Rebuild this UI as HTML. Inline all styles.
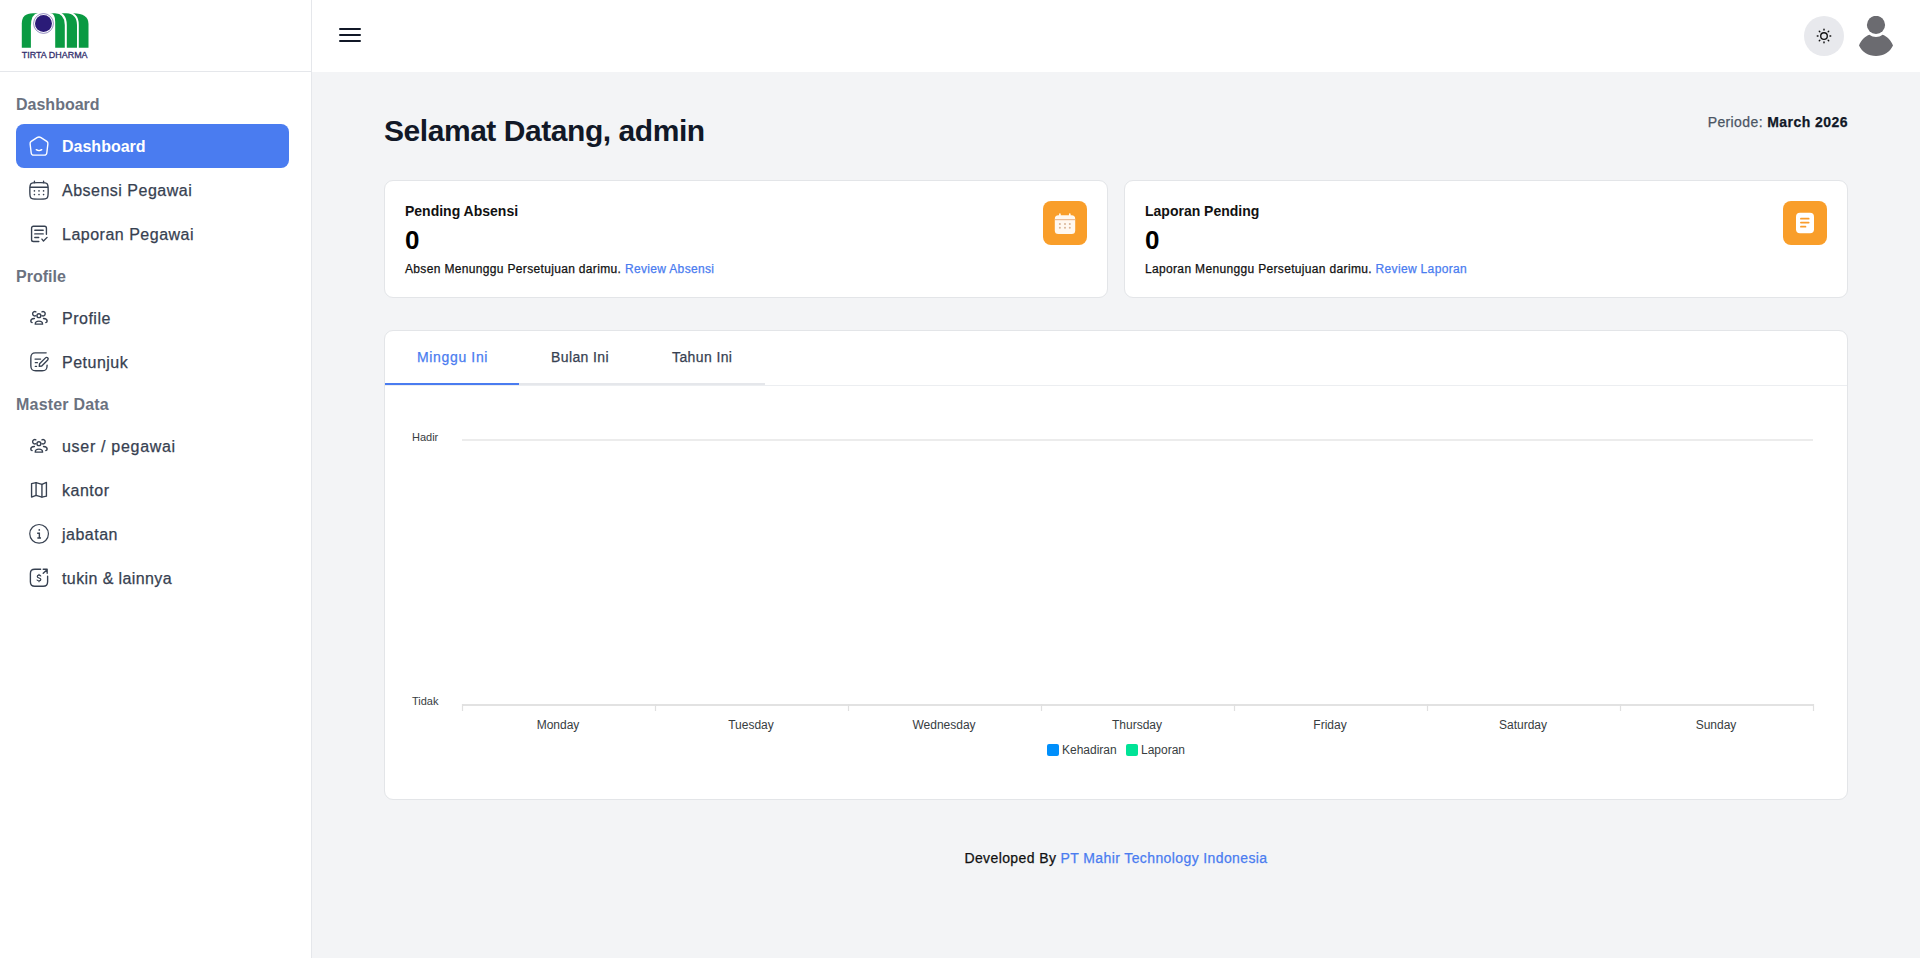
<!DOCTYPE html>
<html>
<head>
<meta charset="utf-8">
<style>
*{box-sizing:border-box;margin:0;padding:0}
html,body{width:1920px;height:958px;overflow:hidden;background:#f3f4f6;font-family:"Liberation Sans",sans-serif;}
.abs{position:absolute;white-space:nowrap;line-height:1}
#sidebar{position:absolute;left:0;top:0;width:312px;height:958px;background:#fff;border-right:1px solid #e5e7eb}
#logo{position:absolute;left:0;top:0;width:311px;height:72px;border-bottom:1px solid #e5e7eb}
#header{position:absolute;left:312px;top:0;width:1608px;height:72px;background:#fff}
.sec{position:absolute;left:16px;font-size:16px;line-height:16px;font-weight:bold;color:#6b7280;white-space:nowrap}
.item{position:absolute;left:16px;width:273px;height:44px;border-radius:8px;color:#374151;font-size:16px;line-height:16px;white-space:nowrap;letter-spacing:0.5px;-webkit-text-stroke:0.25px currentColor}
.item.active{background:#4a7cf0;color:#fff;font-weight:bold;letter-spacing:0;-webkit-text-stroke:0}
.item svg{position:absolute;left:12px;top:11px;width:22px;height:22px;fill:none;stroke:currentColor;stroke-width:1.5;stroke-linecap:round;stroke-linejoin:round}
.item span{position:absolute;left:46px;top:15px}
.card{position:absolute;background:#fff;border:1px solid #e3e5e8;border-radius:9px}
.reg{letter-spacing:0.028em;-webkit-text-stroke:0.25px currentColor}
.ibox{position:absolute;width:44px;height:44px;border-radius:8px;background:#f99e2a}
.ibox svg{position:absolute}
.ylab{position:absolute;font-size:11px;line-height:11px;color:#373d3f;white-space:nowrap}
.xlab{position:absolute;font-size:12px;line-height:12px;color:#373d3f;white-space:nowrap;width:120px;text-align:center}
</style>
</head>
<body>
<div id="sidebar">
  <div id="logo">
    <svg style="position:absolute;left:16px;top:8px" width="80" height="56" viewBox="0 0 80 56">
      <path d="M5.8 39.7 V15.5 Q5.8 5.3 17 5.3 H57 Q72.5 5.3 72.5 16 V39.7 Z" fill="#0a9a42"/>
      <path d="M14.9 40 V18 Q14.9 6 22 5 H34 Q39.2 5 39.2 14 V40 Z" fill="#fff"/>
      <path d="M39 4 C47 4.6 49.8 9 49.8 17 V40" stroke="#fff" stroke-width="2" fill="none"/>
      <path d="M50 4 C58.5 4.6 61.9 9 61.9 17 V40" stroke="#fff" stroke-width="1.8" fill="none"/>
      <circle cx="27.5" cy="15.5" r="9.9" fill="#fff" stroke="#4a3f95" stroke-width="0.6"/>
      <circle cx="27.5" cy="15.5" r="8.5" fill="#2b1b78"/>
      <text x="5.8" y="49.8" font-family="Liberation Sans" font-size="9.2" fill="#34306e" stroke="#34306e" stroke-width="0.3" textLength="65.8" lengthAdjust="spacingAndGlyphs">TIRTA DHARMA</text>
    </svg>
  </div>
  <div class="sec" style="top:97px">Dashboard</div>
  <div class="item active" style="top:124px">
    <svg viewBox="0 0 24 24"><path d="M9.8 2.9 Q12 1.5 14.2 2.9 L20.5 7 Q21.9 7.9 21.7 9.6 L20.5 19.6 Q20.2 22 17.8 22 H6.2 Q3.8 22 3.5 19.6 L2.3 9.6 Q2.1 7.9 3.5 7 Z"/><path d="M9 16c.85.63 1.885 1 3 1s2.15-.37 3-1"/></svg>
    <span>Dashboard</span></div>
  <div class="item" style="top:168px">
    <svg viewBox="0 0 24 24"><path d="M2 12c0-3.771 0-5.657 1.172-6.828S6.229 4 10 4h4c3.771 0 5.657 0 6.828 1.172S22 8.229 22 12v2c0 3.771 0 5.657-1.172 6.828S17.771 22 14 22h-4c-3.771 0-5.657 0-6.828-1.172S2 17.771 2 14z"/><path d="M7 4V2.5M17 4V2.5M2.5 9h19"/><g fill="currentColor" stroke="none"><circle cx="7" cy="13" r="0.9"/><circle cx="12" cy="13" r="0.9"/><circle cx="17" cy="13" r="0.9"/><circle cx="7" cy="17" r="0.9"/><circle cx="12" cy="17" r="0.9"/><circle cx="17" cy="17" r="0.9"/></g></svg>
    <span>Absensi Pegawai</span></div>
  <div class="item" style="top:212px">
    <svg viewBox="0 0 24 24"><path d="M11.8 20.15H5.9a2 2 0 0 1 -2 -2V5.6a2 2 0 0 1 2 -2h12.2a2 2 0 0 1 2 2v6.75"/><path d="M7.4 7.9h9.2M7.4 11.9h9.2M7.4 15.85h4.3"/><path d="M15.2 17.6l1.7 2.1l3.9 -4"/></svg>
    <span>Laporan Pegawai</span></div>
  <div class="sec" style="top:269px">Profile</div>
  <div class="item" style="top:296px">
    <svg viewBox="0 0 24 24"><circle cx="11.9" cy="9.5" r="2.1"/><path d="M8.6 5.3A2.4 2.4 0 1 0 8.6 9.5"/><path d="M15.2 5.3A2.4 2.4 0 1 1 15.2 9.5"/><path d="M7.9 18.7C7.9 16.6 9.5 15.4 11.9 15.4S15.9 16.6 15.9 18.7Z"/><path d="M7 12.5C4.5 12.7 3 13.8 3 15.2C3 16 3.6 16.7 4.5 17"/><path d="M16.9 12.5C19.4 12.7 20.9 13.8 20.9 15.2C20.9 16 20.3 16.7 19.4 17"/></svg>
    <span>Profile</span></div>
  <div class="item" style="top:340px">
    <svg viewBox="0 0 24 24"><path d="M19.8 2H8C4.2 2 3.1 3.4 3.1 7.5V16.2C3.1 20.3 4.5 21.6 8.5 21.6H15.4C19.5 21.6 20.8 20.3 20.8 16.2V15.5"/><path d="M7.7 8.8h6M8 12.7h2.2M8 16.8h1.3"/><path d="M12.3 16.7L12.6 14L19.1 7.5A1.65 1.65 0 0 1 21.5 9.8L15 16.4Z"/></svg>
    <span>Petunjuk</span></div>
  <div class="sec" style="top:397px;letter-spacing:0.2px">Master Data</div>
  <div class="item" style="top:424px">
    <svg viewBox="0 0 24 24"><circle cx="11.9" cy="9.5" r="2.1"/><path d="M8.6 5.3A2.4 2.4 0 1 0 8.6 9.5"/><path d="M15.2 5.3A2.4 2.4 0 1 1 15.2 9.5"/><path d="M7.9 18.7C7.9 16.6 9.5 15.4 11.9 15.4S15.9 16.6 15.9 18.7Z"/><path d="M7 12.5C4.5 12.7 3 13.8 3 15.2C3 16 3.6 16.7 4.5 17"/><path d="M16.9 12.5C19.4 12.7 20.9 13.8 20.9 15.2C20.9 16 20.3 16.7 19.4 17"/></svg>
    <span style="letter-spacing:0.7px">user / pegawai</span></div>
  <div class="item" style="top:468px">
    <svg viewBox="0 0 24 24"><path d="M3.9 5L8.8 3.9L15.2 5.8L20.1 3.8V18.7L15.2 19.7L8.8 17.9L3.9 19.7Z"/><path d="M8.8 3.9V17.9M15.2 5.8V19.7"/></svg>
    <span>kantor</span></div>
  <div class="item" style="top:512px">
    <svg viewBox="0 0 24 24"><circle cx="12.1" cy="11.85" r="10.2" stroke-width="1.3"/><path d="M10 11.2H12.4V16.3M10.2 16.3H14.2" stroke-linecap="butt" stroke-linejoin="miter"/><circle cx="12.3" cy="7.6" r="0.95" fill="currentColor" stroke="none"/></svg>
    <span>jabatan</span></div>
  <div class="item" style="top:556px">
    <svg viewBox="0 0 24 24"><path d="M13.75 2.5H7.5C4 2.5 2.6 3.9 2.6 7.4V16C2.6 19.5 4 20.95 7.5 20.95H16.5C20 20.95 21.4 19.5 21.4 16V10.1"/><path d="M16.6 2.5H20.9V6.9M16.6 6.9L20.8 3"/><path d="M13.9 9.8C13.5 9.2 12.9 8.9 12 8.9C10.9 8.9 10.1 9.5 10.1 10.4C10.1 12.4 14 11.5 14 13.6C14 14.5 13.2 15.1 12 15.1C11 15.1 10.3 14.8 9.9 14.2M12 7.9V8.9M12 15.1V16" stroke-width="1.3"/></svg>
    <span style="letter-spacing:0.4px">tukin &amp; lainnya</span></div>
</div>

<div id="header">
  <svg style="position:absolute;left:27px;top:27px" width="22" height="16" viewBox="0 0 22 16"><path d="M1 2h20M1 8h20M1 14h20" stroke="#111827" stroke-width="2" stroke-linecap="round"/></svg>
  <div style="position:absolute;left:1492px;top:16px;width:40px;height:40px;border-radius:50%;background:#e8e9ed">
    <svg style="position:absolute;left:12px;top:12px" width="16" height="16" viewBox="0 0 16 16">
      <circle cx="8" cy="8" r="3.3" fill="none" stroke="#111" stroke-width="1.35"/>
      <path d="M8 1.3v0.7M8 14v0.7M1.3 8h0.7M14 8h0.7M3.3 3.3l.5 .5M12.2 12.2l.5 .5M3.3 12.7l.5 -.5M12.2 3.8l.5 -.5" stroke="#111" stroke-width="1.45" stroke-linecap="round"/>
    </svg>
  </div>
  <svg style="position:absolute;left:1547px;top:16px" width="34" height="40" viewBox="0 0 34 40">
    <circle cx="17" cy="8.9" r="9.1" fill="#6b6b70"/>
    <path d="M0 29.5 C2 24 6.5 20 10.5 18.8 C12.5 20.3 14.5 21 17 21 C19.5 21 21.5 20.3 23.5 18.8 C27.5 20 32 24 34 29.5 C31 36 24.5 40 17 40 C9.5 40 3 36 0 29.5 Z" fill="#6b6b70"/>
  </svg>
</div>

<div class="abs" style="left:384px;top:116px;font-size:30px;line-height:30px;font-weight:bold;color:#111827;letter-spacing:-0.45px">Selamat Datang, admin</div>
<div class="abs reg" style="right:72px;top:115px;font-size:14px;line-height:14px;color:#4b5563">Periode: <b style="color:#111827;letter-spacing:0.45px">March 2026</b></div>

<div class="card" style="left:384px;top:180px;width:724px;height:118px">
  <div class="abs" style="left:20px;top:23px;font-size:14px;line-height:14px;font-weight:bold;color:#111">Pending Absensi</div>
  <div class="abs" style="left:20px;top:46px;font-size:26px;line-height:26px;font-weight:bold;color:#000">0</div>
  <div class="abs reg" style="left:20px;top:82px;font-size:12px;line-height:12px;color:#111">Absen Menunggu Persetujuan darimu. <span style="color:#4a7cf0">Review Absensi</span></div>
  <div class="ibox" style="left:658px;top:20px">
    <svg style="left:0;top:0" width="44" height="44" viewBox="0 0 44 44">
      <rect x="11.8" y="14.3" width="20.4" height="18.8" rx="3.6" fill="#fff8f0"/>
      <path d="M16.9 13.2v2.5M26.8 13.2v2.5" stroke="#fff8f0" stroke-width="1.7" stroke-linecap="round"/>
      <path d="M11.8 18.7h20.4" stroke="#e3a676" stroke-width="0.9"/>
      <g fill="#d9b496"><circle cx="16.9" cy="23" r="1"/><circle cx="22" cy="23" r="1"/><circle cx="26.8" cy="23" r="1"/><circle cx="16.9" cy="26.7" r="1"/><circle cx="22" cy="26.7" r="1"/><circle cx="26.8" cy="26.7" r="1"/></g>
    </svg>
  </div>
</div>
<div class="card" style="left:1124px;top:180px;width:724px;height:118px">
  <div class="abs" style="left:20px;top:23px;font-size:14px;line-height:14px;font-weight:bold;color:#111">Laporan Pending</div>
  <div class="abs" style="left:20px;top:46px;font-size:26px;line-height:26px;font-weight:bold;color:#000">0</div>
  <div class="abs reg" style="left:20px;top:82px;font-size:12px;line-height:12px;color:#111">Laporan Menunggu Persetujuan darimu. <span style="color:#4a7cf0">Review Laporan</span></div>
  <div class="ibox" style="left:658px;top:20px">
    <svg style="left:0;top:0" width="44" height="44" viewBox="0 0 44 44">
      <rect x="13" y="11.8" width="18" height="20.4" rx="4" fill="#fff"/>
      <path d="M17.9 17.7h7.8M17.9 21.6h7.8M17.9 25.7h4.6" stroke="#f99c2c" stroke-width="1.7" stroke-linecap="round"/>
    </svg>
  </div>
</div>

<div class="card" style="left:384px;top:330px;width:1464px;height:470px">
  <div style="position:absolute;left:0;top:54px;width:1462px;height:1px;background:#eceef1"></div>
  <div style="position:absolute;left:0;top:52px;width:134px;height:2px;background:#4a7cf0"></div>
  <div style="position:absolute;left:134px;top:52px;width:246px;height:2px;background:#e5e7eb"></div>
  <div class="abs reg" style="left:32px;top:19px;font-size:14px;line-height:14px;color:#4a7cf0;letter-spacing:0.65px">Minggu Ini</div>
  <div class="abs reg" style="left:166px;top:19px;font-size:14px;line-height:14px;color:#374151">Bulan Ini</div>
  <div class="abs reg" style="left:287px;top:19px;font-size:14px;line-height:14px;color:#374151">Tahun Ini</div>
</div>

<!-- chart -->
<div style="position:absolute;left:462px;top:439px;width:1351px;height:2px;background:#ececec"></div>
<div style="position:absolute;left:462px;top:704px;width:1352px;height:2px;background:#e2e2e2"></div>
<svg style="position:absolute;left:460px;top:704px" width="1356" height="9"><path d="M2.5 0v7M195.5 0v7M388.5 0v7M581.5 0v7M774.5 0v7M967.5 0v7M1160.5 0v7M1353.5 0v7" stroke="#e0e0e0" stroke-width="1.2"/></svg>
<div class="ylab" style="left:412px;top:432px">Hadir</div>
<div class="ylab" style="left:412px;top:696px">Tidak</div>
<div class="xlab" style="left:498px;top:719px">Monday</div>
<div class="xlab" style="left:691px;top:719px">Tuesday</div>
<div class="xlab" style="left:884px;top:719px">Wednesday</div>
<div class="xlab" style="left:1077px;top:719px">Thursday</div>
<div class="xlab" style="left:1270px;top:719px">Friday</div>
<div class="xlab" style="left:1463px;top:719px">Saturday</div>
<div class="xlab" style="left:1656px;top:719px">Sunday</div>
<div style="position:absolute;left:1047px;top:744px;width:12px;height:12px;border-radius:2px;background:#008ffb"></div>
<div class="ylab" style="left:1062px;top:744px;font-size:12px;line-height:12px">Kehadiran</div>
<div style="position:absolute;left:1126px;top:744px;width:12px;height:12px;border-radius:2px;background:#00e396"></div>
<div class="ylab" style="left:1141px;top:744px;font-size:12px;line-height:12px">Laporan</div>

<div class="abs reg" style="left:0;width:2232px;text-align:center;top:851px;font-size:14px;line-height:14px;color:#111">Developed By <span style="color:#4a7cf0">PT Mahir Technology Indonesia</span></div>
</body>
</html>
